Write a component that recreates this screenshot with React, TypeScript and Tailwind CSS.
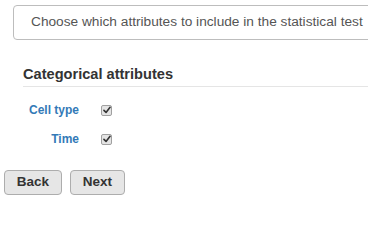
import * as React from 'react'

const ATTRIBUTES = ['Cell type', 'Time']

function CheckMark() {
  return (
    <span className="flex size-[11px] items-center justify-center rounded-[2px] border border-[#a0a0a0] bg-[#e4e4e4]">
      <svg viewBox="0 0 10 10" className="size-[8px]">
        <path d="M1.2 5.4 L3.8 8 L8.8 1.6" fill="none" stroke="#333" strokeWidth="2" strokeLinecap="round" strokeLinejoin="round" />
      </svg>
    </span>
  )
}

export default function App() {
  return (
    <div className="h-[200px] w-[368px] overflow-hidden bg-white font-['Liberation_Sans',Arial,sans-serif]">
      <div className="ml-[13px] mt-[5px] flex h-[35px] w-[370px] items-center rounded-[4px] border border-[#bdbdbd] pl-[17px] text-[13.7px] text-[#555]">
        Choose which attributes to include in the statistical test
      </div>

      <div className="ml-[23px] mt-[24px] border-b border-[#e5e5e5] pb-[2px] text-[14.6px] font-bold leading-[20px] text-[#333]">
        Categorical attributes
      </div>

      <div className="mt-[17px] grid grid-cols-[79px_auto] gap-x-[22px] gap-y-[17px]">
        {ATTRIBUTES.map((name) => (
          <React.Fragment key={name}>
            <label className="text-right text-[12px] font-bold leading-[12px] text-[#337ab7]">{name}</label>
            <div className="flex items-center">
              <CheckMark />
            </div>
          </React.Fragment>
        ))}
      </div>

      <div className="ml-[4px] mt-[25px] flex gap-[8px]">
        <button type="button" className="h-[25px] w-[58px] rounded-[4px] border border-[#adadad] bg-[#e6e6e6] text-[13.5px] font-bold text-[#333]">
          Back
        </button>
        <button type="button" className="h-[25px] w-[55px] rounded-[4px] border border-[#adadad] bg-[#e6e6e6] text-[13.5px] font-bold text-[#333]">
          Next
        </button>
      </div>
    </div>
  )
}
